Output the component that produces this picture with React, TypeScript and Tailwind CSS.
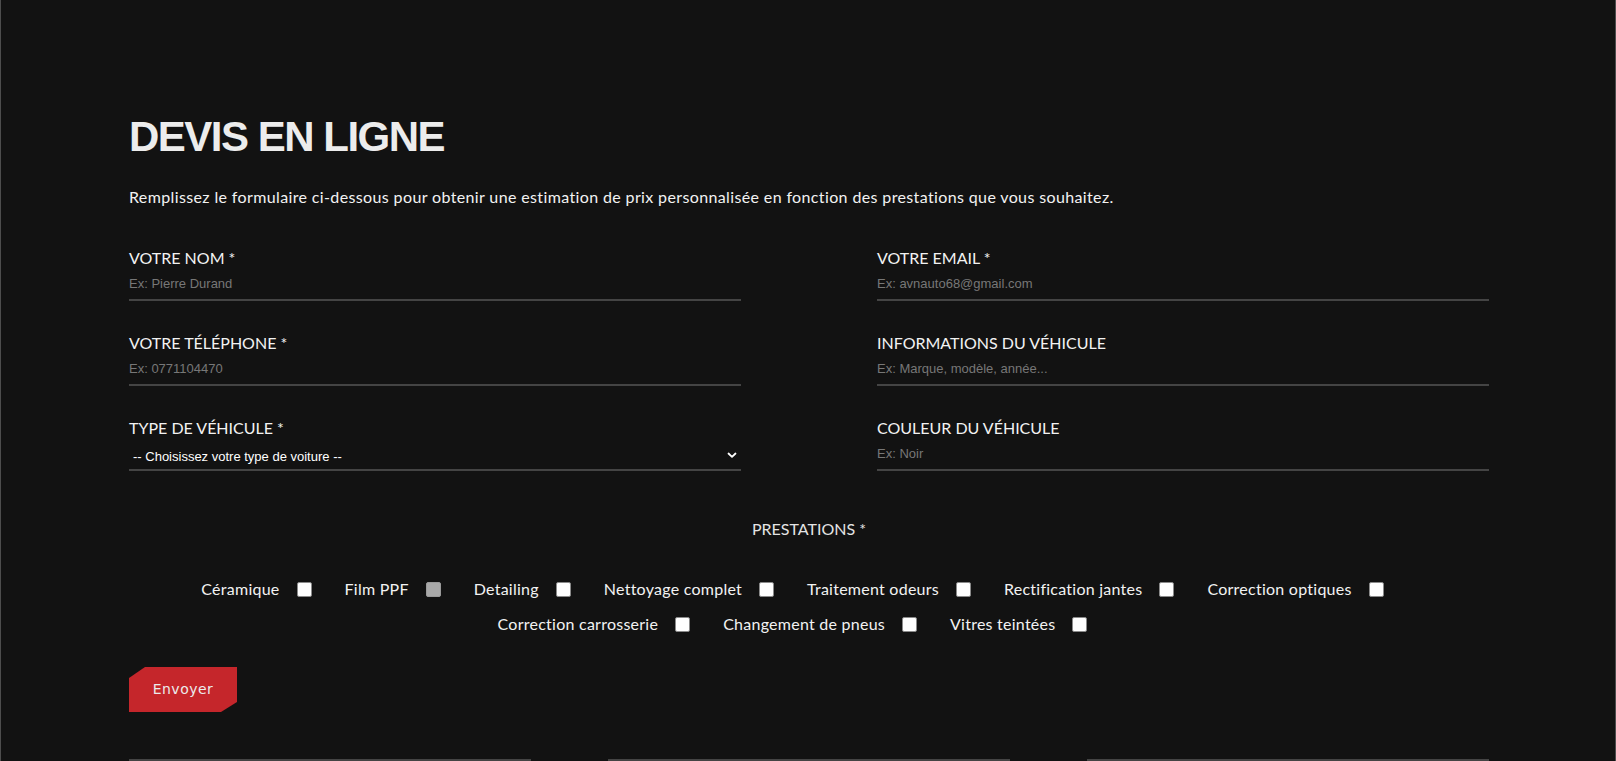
import React from "react";

const fields = [
  { label: "VOTRE NOM *", placeholder: "Ex: Pierre Durand" },
  { label: "VOTRE EMAIL *", placeholder: "Ex: avnauto68@gmail.com" },
  { label: "VOTRE TÉLÉPHONE *", placeholder: "Ex: 0771104470" },
  { label: "INFORMATIONS DU VÉHICULE", placeholder: "Ex: Marque, modèle, année..." },
  { label: "TYPE DE VÉHICULE *", select: true },
  { label: "COULEUR DU VÉHICULE", placeholder: "Ex: Noir" },
];

const services = [
  "Céramique",
  "Film PPF",
  "Detailing",
  "Nettoyage complet",
  "Traitement odeurs",
  "Rectification jantes",
  "Correction optiques",
  "Correction carrosserie",
  "Changement de pneus",
  "Vitres teintées",
];

export default function App() {
  return (
    <div className="h-[761px] overflow-hidden bg-[#121212] border-x border-[#4d4d4d] text-[#f2f2f2] font-['Lato',sans-serif]">
      <div className="w-[1360px] ml-[128px] pt-[116px]">
        <h1 className="text-[42px] leading-[42px] font-bold tracking-[-1.5px] text-[#ececec] font-['Liberation_Sans',Arial,sans-serif]">
          DEVIS EN LIGNE
        </h1>
        <p className="mt-[27px] text-[16px] leading-[24px] tracking-[0.37px]">
          Remplissez le formulaire ci-dessous pour obtenir une estimation de prix personnalisée en fonction des prestations que vous souhaitez.
        </p>

        <div className="mt-[37px] grid grid-cols-2 gap-x-[136px] gap-y-[30px]">
          {fields.map((f) => (
            <div key={f.label} className="flex flex-col">
              <label className="text-[16px] leading-[24px] h-[24px]">{f.label}</label>
              {f.select ? (
                <div className="relative mt-[2px]">
                  <select
                    defaultValue=""
                    className="appearance-none w-full h-[29px] pl-[4px] pt-[2px] bg-transparent border-0 border-b-2 border-[#444] outline-none text-[13px] text-white font-['Liberation_Sans',Arial,sans-serif]"
                  >
                    <option value="" className="bg-[#121212]">-- Choisissez votre type de voiture --</option>
                  </select>
                  <svg
                    className="absolute right-[4px] top-[10px] pointer-events-none"
                    width="10"
                    height="7"
                    viewBox="0 0 10 7"
                    fill="none"
                  >
                    <polyline points="1.5,1.5 5,4.8 8.5,1.5" stroke="white" strokeWidth="1.8" strokeLinecap="round" strokeLinejoin="round" />
                  </svg>
                </div>
              ) : (
                <input
                  type="text"
                  placeholder={f.placeholder}
                  className="mt-[2px] w-full h-[29px] pb-[4px] bg-transparent border-0 border-b-2 border-[#444] outline-none text-[13px] text-white placeholder:text-[#777] font-['Liberation_Sans',Arial,sans-serif]"
                />
              )}
            </div>
          ))}
        </div>

        <div className="mt-[46px] text-center text-[16px] leading-[24px] text-[#e4e4e4]">PRESTATIONS *</div>

        <div className="mt-[36px] flex flex-wrap justify-center gap-y-[11px]">
          {services.map((s) => (
            <label key={s} className="flex items-center h-[24px] mr-[33px] text-[16px] leading-[24px] tracking-[0.25px]">
              <span>{s}</span>
              <span
                className={
                  s === "Film PPF"
                    ? "ml-[17px] w-[15px] h-[15px] rounded-[2px] bg-[#a9a9a9] border border-[#9a9a9a]"
                    : "ml-[17px] w-[15px] h-[15px] rounded-[2px] bg-white border border-[#8a8a8a]"
                }
              />
            </label>
          ))}
        </div>

        <div className="mt-[31px]">
          <button
            type="button"
            className="w-[108px] h-[45px] bg-[#c5262b] text-[#ececec] text-[14px] font-medium tracking-[0.5px] font-['DejaVu_Sans',sans-serif] [clip-path:polygon(16px_0,100%_0,100%_calc(100%_-_10px),calc(100%_-_16px)_100%,0_100%,0_11px)]"
          >
            Envoyer
          </button>
        </div>

        <div className="mt-[47px] grid grid-cols-3 gap-x-[77px]">
          <div className="h-[2px] bg-[#444]" />
          <div className="h-[2px] bg-[#444]" />
          <div className="h-[2px] bg-[#444]" />
        </div>
      </div>
    </div>
  );
}
